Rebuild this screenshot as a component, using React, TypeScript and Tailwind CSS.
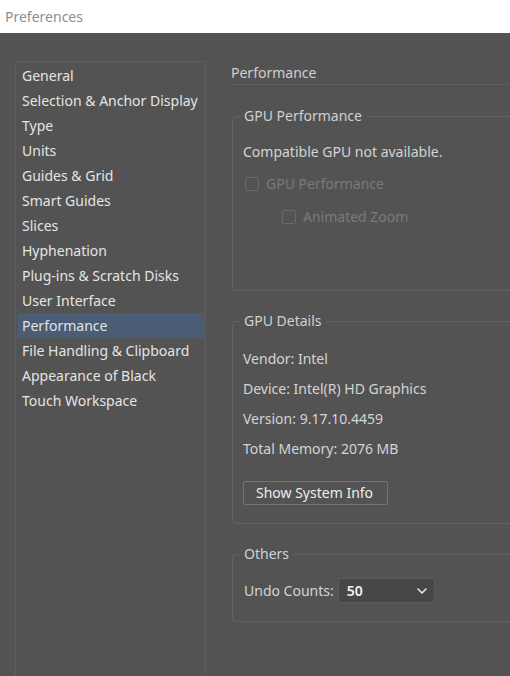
import React from "react";

const items = [
  "General",
  "Selection & Anchor Display",
  "Type",
  "Units",
  "Guides & Grid",
  "Smart Guides",
  "Slices",
  "Hyphenation",
  "Plug-ins & Scratch Disks",
  "User Interface",
  "Performance",
  "File Handling & Clipboard",
  "Appearance of Black",
  "Touch Workspace",
];

function Group({ title, children, className = "" }: { title: string; children: React.ReactNode; className?: string }) {
  return (
    <fieldset className={`border border-[#606060] rounded-[3px] pl-[7px] ${className}`}>
      <legend className="px-[4px] text-[14px] leading-[20px] text-[#d0d0d0]">{title}</legend>
      <div className="pl-[3px]">{children}</div>
    </fieldset>
  );
}

function Check({ label, className = "" }: { label: string; className?: string }) {
  return (
    <div className={`flex items-center h-[20px] ${className}`}>
      <span className="w-[14px] h-[14px] border border-[#6a6a6a] rounded-[2px] ml-[2px]" />
      <span className="ml-[7px] text-[#7a7a7a]">{label}</span>
    </div>
  );
}

export default function App() {
  return (
    <div
      className="w-[510px] h-[676px] overflow-hidden bg-[#535353] flex flex-col text-[14px] leading-[20px]"
      style={{ fontFamily: '"Segoe UI", "Noto Sans", sans-serif' }}
    >
      <div className="h-[33px] bg-white shrink-0 flex items-center pl-[5px] text-[#8d8d8d] text-[14px]">
        Preferences
      </div>
      <div className="flex pt-[28px] pl-[15px]">
        <div className="w-[191px] h-[680px] shrink-0 border border-[#5f5f5f] rounded-[3px] px-[1px] pt-[1px]">
          {items.map((t) => (
            <div
              key={t}
              className={`h-[25px] flex items-center pl-[5px] text-[#e4e4e4] whitespace-nowrap ${
                t === "Performance" ? "bg-[#4a5d75]" : ""
              }`}
            >
              {t}
            </div>
          ))}
        </div>
        <div className="ml-[25px] w-[320px] shrink-0 pt-[2px]">
          <div className="pb-[1px] border-b border-[#5e5e5e] text-[#cfcfcf]">Performance</div>
          <div className="pl-[1px]">
            <Group title="GPU Performance" className="mt-[21px] pb-[63px]">
              <div className="mt-[16px] text-[#d4d4d4]">Compatible GPU not available.</div>
              <Check label="GPU Performance" className="mt-[12px]" />
              <Check label="Animated Zoom" className="mt-[13px] ml-[37px]" />
            </Group>
            <Group title="GPU Details" className="mt-[20px] pb-[18px]">
              <div className="mt-[18px] flex flex-col gap-[10px] text-[#d4d4d4]">
                <div>Vendor: Intel</div>
                <div>Device: Intel(R) HD Graphics</div>
                <div>Version: 9.17.10.4459</div>
                <div>Total Memory: 2076 MB</div>
              </div>
              <button className="mt-[22px] h-[24px] w-[145px] border border-[#737373] rounded-[2px] text-left pl-[12px] text-[#ececec] leading-[20px]">
                Show System Info
              </button>
            </Group>
            <Group title="Others" className="mt-[20px] pb-[18px]">
              <div className="mt-[14px] flex items-center">
                <span className="ml-[1px] text-[#d4d4d4]">Undo Counts:</span>
                <div className="ml-[4px] w-[97px] h-[25px] bg-[#474747] border border-[#5c5c5c] rounded-[3px] flex items-center justify-between pl-[8px] pr-[7px]">
                  <span className="text-[#f2f2f2] font-semibold">50</span>
                  <svg width="10" height="6" viewBox="0 0 10 6" fill="none">
                    <path d="M1 1l4 4 4-4" stroke="#e8e8e8" strokeWidth="1.6" strokeLinecap="round" strokeLinejoin="round" />
                  </svg>
                </div>
              </div>
            </Group>
          </div>
        </div>
      </div>
    </div>
  );
}
